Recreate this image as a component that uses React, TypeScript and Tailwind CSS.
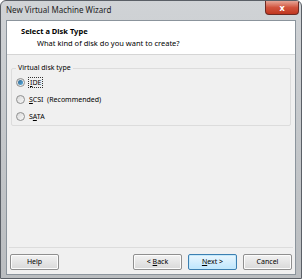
import React from "react";

const font = { fontFamily: '"Noto Sans", "Liberation Sans", sans-serif' };

function Radio({ checked }: { checked?: boolean }) {
  return (
    <span className="relative flex h-[9px] w-[9px] shrink-0 items-center justify-center rounded-full border border-[#8e8f8f] bg-gradient-to-br from-[#d9d9d9] to-[#f8f8f8]">
      {checked && <span className="h-[5px] w-[5px] rounded-full bg-gradient-to-br from-[#2c628b] to-[#5fb3e6]" />}
    </span>
  );
}

function Btn({ children, def }: { children: React.ReactNode; def?: boolean }) {
  return (
    <div
      className={
        "flex h-[16px] w-[49px] items-center justify-center whitespace-pre rounded-[2px] border text-[7px] text-black " +
        (def
          ? "border-[#3c7fb1] bg-gradient-to-b from-[#eaf6fd] to-[#bee6fd] shadow-[inset_0_0_0_1px_#c5e9fb]"
          : "border-[#8f8f8f] bg-gradient-to-b from-[#f2f2f2] to-[#d9d9d9] shadow-[inset_0_0_0_1px_#fcfcfc]")
      }
    >
      {children}
    </div>
  );
}

export default function App() {
  return (
    <div
      style={font}
      className="flex h-[279px] w-[302px] flex-col overflow-hidden rounded-t-[6px] border border-[#5a5f66] bg-gradient-to-b from-[#d0d3d6] via-[#c4c7ca] to-[#babdc0]"
    >
      <div className="flex h-[19px] shrink-0 items-start justify-between">
        <span className="pl-[5px] pt-[3px] text-[8px] leading-[12px] text-[#1e1e1e]">New Virtual Machine Wizard</span>
        <div className="mr-[2px] flex h-[14px] w-[34px] items-center justify-center rounded-b-[4px] border border-t-0 border-[#6d2a22] bg-gradient-to-b from-[#e5a597] via-[#d1533d] to-[#c0361f]">
          <span className="text-[9px] font-bold leading-none text-white">x</span>
        </div>
      </div>
      <div className="mx-[5px] mb-[3px] flex flex-1 flex-col border border-[#8b949c] bg-[#f0f0f0]">
        <div className="flex h-[34px] shrink-0 flex-col border-b border-[#d5d5d5] bg-white pl-[14px] pt-[4px]">
          <span className="text-[7.5px] font-bold leading-[12px] text-black">Select a Disk Type</span>
          <span className="pl-[16px] text-[7.5px] leading-[12px] text-black">What kind of disk do you want to create?</span>
        </div>
        <div className="flex-1 px-[4px] pt-[7px]">
          <fieldset className="h-[64px] rounded-[2px] border border-[#dcdcdc] pl-[4px] pr-[4px]">
            <legend className="px-[2px] text-[7px] leading-[12px] text-black">Virtual disk type</legend>
            <div className="flex flex-col gap-[6px] pt-[3px] text-[7px] leading-[11px] text-black">
              <div className="flex items-center gap-[3px]">
                <Radio checked />
                <span className="border border-dotted border-[#333] px-[1px] leading-[9px]"><u>I</u>DE</span>
              </div>
              <div className="flex items-center gap-[4px]">
                <Radio />
                <span><u>S</u>CSI&nbsp;&nbsp;(Recommended)</span>
              </div>
              <div className="flex items-center gap-[4px]">
                <Radio />
                <span>S<u>A</u>TA</span>
              </div>
            </div>
          </fieldset>
        </div>
        <div className="mx-[2px] border-t border-[#dcdcdc]" />
        <div className="flex h-[26px] shrink-0 items-center justify-between px-[3px] pt-[2px]">
          <Btn>Help</Btn>
          <div className="flex gap-[6px]">
            <Btn>{"< "}<u>B</u>ack</Btn>
            <Btn def><u>N</u>{"ext >"}</Btn>
            <Btn>Cancel</Btn>
          </div>
        </div>
      </div>
    </div>
  );
}
